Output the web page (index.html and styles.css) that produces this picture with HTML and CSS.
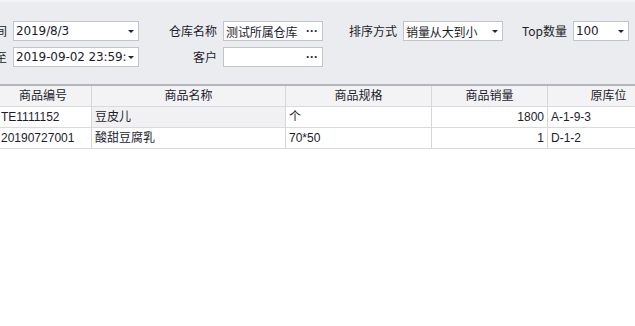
FILE: index.html
```html
<!DOCTYPE html>
<html>
<head>
    <meta charset='utf-8'>
    <title>商品销量排行</title>
    <link rel="stylesheet" href="styles.css">
</head>
<body>
    <div class="filter">
        <div class="filter-grid">
            <label class="lbl">销售时间</label>
            <div class="box combo"><span class="val">2019/8/3</span><span class="arrow"></span></div>
            <label class="lbl">仓库名称</label>
            <div class="box combo"><span class="val">测试所属仓库</span><span class="dots">···</span></div>
            <label class="lbl">排序方式</label>
            <div class="box combo"><span class="val">销量从大到小</span><span class="arrow"></span></div>
            <label class="lbl">Top数量</label>
            <div class="box combo"><span class="val">100</span><span class="arrow"></span></div>

            <label class="lbl">至</label>
            <div class="box combo"><span class="val">2019-09-02 23:59:59</span><span class="arrow"></span></div>
            <label class="lbl">客户</label>
            <div class="box combo"><span class="val"></span><span class="dots">···</span></div>
        </div>
    </div>

    <div class="grid">
        <div class="row head">
            <div class="cell c1">商品编号</div>
            <div class="cell c2">商品名称</div>
            <div class="cell c3">商品规格</div>
            <div class="cell c4">商品销量</div>
            <div class="cell c5">原库位</div>
        </div>
        <div class="row">
            <div class="cell c1">TE1111152</div>
            <div class="cell c2 focused">豆皮儿</div>
            <div class="cell c3">个</div>
            <div class="cell c4 num">1800</div>
            <div class="cell c5">A-1-9-3</div>
        </div>
        <div class="row">
            <div class="cell c1">20190727001</div>
            <div class="cell c2">酸甜豆腐乳</div>
            <div class="cell c3">70*50</div>
            <div class="cell c4 num">1</div>
            <div class="cell c5">D-1-2</div>
        </div>
    </div>
</body>
</html>
```

FILE: styles.css
```css
* {
    margin: 0;
    padding: 0;
    box-sizing: border-box;
}

body {
    width: 635px;
    height: 326px;
    overflow: hidden;
    background: #fff;
    color: #1c1c2c;
    font-family: "Liberation Sans", "Noto Sans CJK SC", sans-serif;
    font-size: 12px;
}

.filter {
    height: 86px;
    background: #ebecef;
    border-top: 2px solid #f4f4f6;
    border-bottom: 2px solid #b4b5bb;
    overflow: hidden;
}

.filter-grid {
    display: grid;
    grid-template-columns: 49px 126px 84px 100px 80px 100px 70px 56px;
    grid-template-rows: 20px 20px;
    row-gap: 6px;
    margin-left: -36px;
    padding-top: 19px;
}

.lbl {
    padding-right: 6px;
    text-align: right;
    line-height: 20px;
    white-space: nowrap;
    overflow: hidden;
    direction: rtl;
    font-family: "Noto Sans CJK SC", sans-serif;
}

.box {
    background: #fff;
    border: 1px solid #c3c4cb;
    display: flex;
    align-items: center;
    padding: 0 4px 0 2px;
    overflow: hidden;
}

.val {
    flex: 1;
    white-space: nowrap;
    overflow: hidden;
    font-family: "DejaVu Sans", "Noto Sans CJK SC", sans-serif;
    letter-spacing: -0.1px;
}

.arrow {
    width: 0;
    height: 0;
    border-left: 3px solid transparent;
    border-right: 3px solid transparent;
    border-top: 3px solid #23233a;
    margin-left: 1px;
}

.dots {
    font-weight: bold;
    font-size: 12px;
    line-height: 12px;
    color: #23233a;
}

.grid {
    margin-left: -5px;
    width: 680px;
}

.row {
    display: flex;
    height: 21px;
    border-bottom: 1px solid #dadade;
}

.row.head {
    background: #f3f3f5;
    text-align: center;
}

.cell {
    line-height: 20px;
    border-right: 1px solid #d6d6db;
    padding: 0 3px;
    white-space: nowrap;
    overflow: hidden;
    font-family: "Liberation Sans", "Noto Sans CJK SC", sans-serif;
}

.c1 { width: 97px; padding-left: 6px; }
.c2 { width: 194px; }
.c3 { width: 146px; }
.c4 { width: 116px; }
.c5 { width: 122px; }

.head .cell { padding: 0; }

.num { text-align: right; }

.focused { background: #f1f1f3; }
```
